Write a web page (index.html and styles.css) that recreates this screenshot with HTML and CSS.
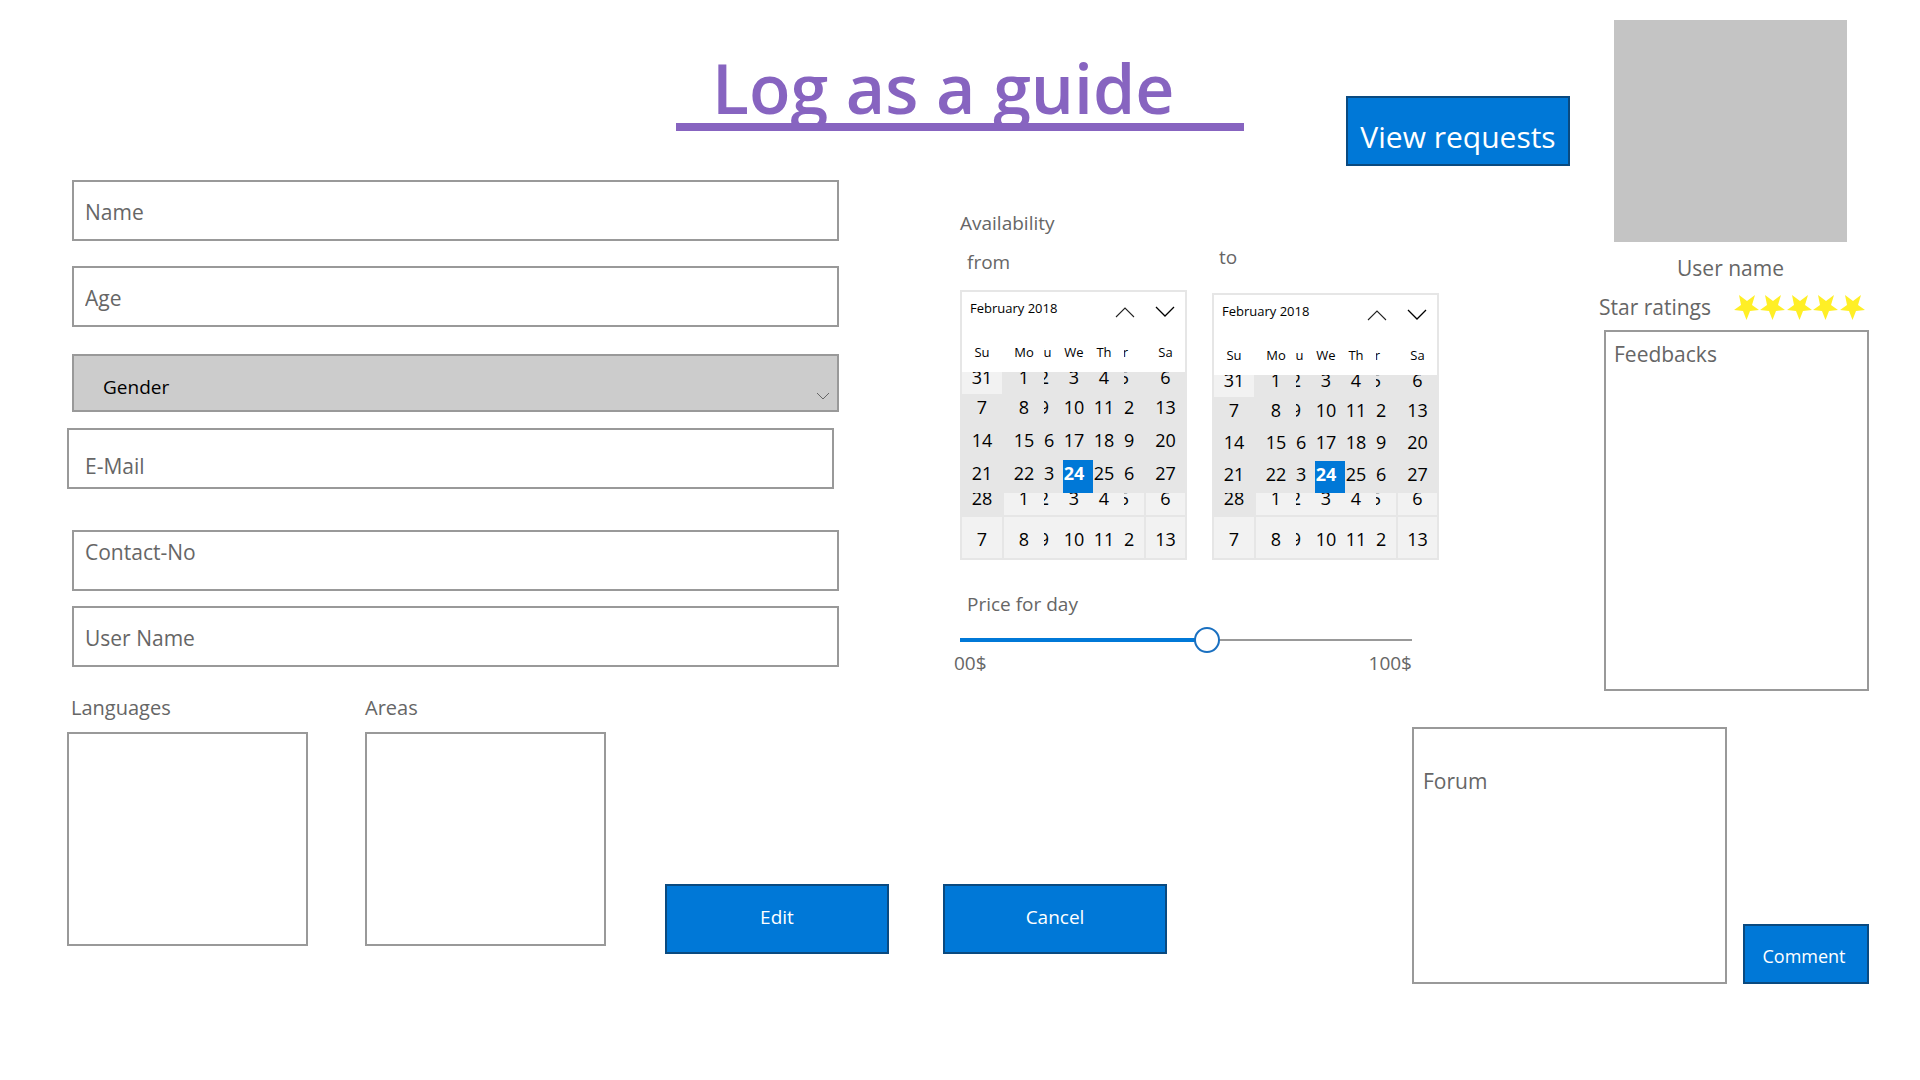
FILE: index.html
```html
<!DOCTYPE html>
<html lang="en">
<head>
<meta charset="utf-8">
<title>Log as a guide</title>
<link rel="stylesheet" href="styles.css">
</head>
<body>
<div class="page">
  <div class="top">
    <main class="main">
      <header class="header">
        <h1 class="title">Log as a guide</h1>
        <button class="btn btn-large" type="button">View requests</button>
      </header>
      <div class="columns">
        <form class="form">
          <input class="field" type="text" aria-label="Name" placeholder="Name">
          <input class="field field-age" type="text" aria-label="Age" placeholder="Age">
          <div class="select-wrap">
            <select class="select" aria-label="Gender"><option>Gender</option></select>
            <svg class="select-arrow" width="14" height="8" viewBox="0 0 14 8" aria-hidden="true"><path d="M1 1l6 6 6-6" fill="none" stroke="#666" stroke-width="1"/></svg>
          </div>
          <input class="field field-email" type="email" aria-label="E-Mail" placeholder="E-Mail">
          <input class="field field-contact" type="tel" aria-label="Contact-No" placeholder="Contact-No">
          <input class="field field-user" type="text" aria-label="User Name" placeholder="User Name">
        </form>
        <section class="availability">
          <h2 class="label">Availability</h2>
          <div class="calendars">
            <div class="calendar-col">
              <h3 class="label label-inset">from</h3>
              <div class="calendar">
                <div class="cal-head">
                  <span class="cal-month">February 2018</span>
                  <button class="cal-nav" type="button" aria-label="Previous month"><svg width="20" height="12" viewBox="0 0 20 12"><path d="M1 11l9-9 9 9" fill="none" stroke="#222" stroke-width="1.1"/></svg></button>
                  <button class="cal-nav" type="button" aria-label="Next month"><svg width="20" height="12" viewBox="0 0 20 12"><path d="M1 1l9 9 9-9" fill="none" stroke="#000" stroke-width="1.3"/></svg></button>
                </div>
                <table class="days">
                  <thead><tr><th class="su"><span>Su</span></th><th class="mo"><span>Mo</span></th><th class="cut tu"><span>Tu</span></th><th class="we"><span>We</span></th><th class="th"><span>Th</span></th><th class="cut fr"><span>Fr</span></th><th class="sa"><span>Sa</span></th></tr></thead>
                  <tbody>
                    <tr class="short"><td class="su out"><span>31</span></td><td><span>1</span></td><td class="cut"><span>2</span></td><td><span>3</span></td><td><span>4</span></td><td class="cut"><span>5</span></td><td class="sa"><span>6</span></td></tr>
                    <tr><td class="su"><span>7</span></td><td><span>8</span></td><td class="cut"><span>9</span></td><td><span>10</span></td><td><span>11</span></td><td class="cut"><span>12</span></td><td class="sa"><span>13</span></td></tr>
                    <tr><td class="su"><span>14</span></td><td><span>15</span></td><td class="cut"><span>16</span></td><td><span>17</span></td><td><span>18</span></td><td class="cut"><span>19</span></td><td class="sa"><span>20</span></td></tr>
                    <tr><td class="su"><span>21</span></td><td><span>22</span></td><td class="cut"><span>23</span></td><td class="today"><span>24</span></td><td><span>25</span></td><td class="cut"><span>26</span></td><td class="sa"><span>27</span></td></tr>
                    <tr class="short"><td class="su"><span>28</span></td><td class="out"><span>1</span></td><td class="cut out"><span>2</span></td><td class="out"><span>3</span></td><td class="out"><span>4</span></td><td class="cut out"><span>5</span></td><td class="sa out"><span>6</span></td></tr>
                    <tr class="tall"><td class="su out"><span>7</span></td><td class="out"><span>8</span></td><td class="cut out"><span>9</span></td><td class="out"><span>10</span></td><td class="out"><span>11</span></td><td class="cut out"><span>12</span></td><td class="sa out"><span>13</span></td></tr>
                  </tbody>
                </table>
              </div>
            </div>
            <div class="calendar-col calendar-col-to">
              <h3 class="label label-inset">to</h3>
              <div class="calendar">
                <div class="cal-head">
                  <span class="cal-month">February 2018</span>
                  <button class="cal-nav" type="button" aria-label="Previous month"><svg width="20" height="12" viewBox="0 0 20 12"><path d="M1 11l9-9 9 9" fill="none" stroke="#222" stroke-width="1.1"/></svg></button>
                  <button class="cal-nav" type="button" aria-label="Next month"><svg width="20" height="12" viewBox="0 0 20 12"><path d="M1 1l9 9 9-9" fill="none" stroke="#000" stroke-width="1.3"/></svg></button>
                </div>
                <table class="days">
                  <thead><tr><th class="su"><span>Su</span></th><th class="mo"><span>Mo</span></th><th class="cut tu"><span>Tu</span></th><th class="we"><span>We</span></th><th class="th"><span>Th</span></th><th class="cut fr"><span>Fr</span></th><th class="sa"><span>Sa</span></th></tr></thead>
                  <tbody>
                    <tr class="short"><td class="su out"><span>31</span></td><td><span>1</span></td><td class="cut"><span>2</span></td><td><span>3</span></td><td><span>4</span></td><td class="cut"><span>5</span></td><td class="sa"><span>6</span></td></tr>
                    <tr><td class="su"><span>7</span></td><td><span>8</span></td><td class="cut"><span>9</span></td><td><span>10</span></td><td><span>11</span></td><td class="cut"><span>12</span></td><td class="sa"><span>13</span></td></tr>
                    <tr><td class="su"><span>14</span></td><td><span>15</span></td><td class="cut"><span>16</span></td><td><span>17</span></td><td><span>18</span></td><td class="cut"><span>19</span></td><td class="sa"><span>20</span></td></tr>
                    <tr><td class="su"><span>21</span></td><td><span>22</span></td><td class="cut"><span>23</span></td><td class="today"><span>24</span></td><td><span>25</span></td><td class="cut"><span>26</span></td><td class="sa"><span>27</span></td></tr>
                    <tr class="short"><td class="su"><span>28</span></td><td class="out"><span>1</span></td><td class="cut out"><span>2</span></td><td class="out"><span>3</span></td><td class="out"><span>4</span></td><td class="cut out"><span>5</span></td><td class="sa out"><span>6</span></td></tr>
                    <tr class="tall"><td class="su out"><span>7</span></td><td class="out"><span>8</span></td><td class="cut out"><span>9</span></td><td class="out"><span>10</span></td><td class="out"><span>11</span></td><td class="cut out"><span>12</span></td><td class="sa out"><span>13</span></td></tr>
                  </tbody>
                </table>
              </div>
            </div>
          </div>
          <div class="price">
            <label class="label label-inset" for="price">Price for day</label>
            <input class="slider" id="price" type="range" min="0" max="100" value="55">
            <div class="scale"><span>00$</span><span>100$</span></div>
          </div>
        </section>
      </div>
    </main>
    <aside class="profile">
      <div class="photo"></div>
      <p class="user">User name</p>
      <div class="rating">
        <span>Star ratings</span>
        <svg width="131" height="25" viewBox="0 0 131 25" role="img" aria-label="5 stars">
          <defs><path id="star" d="M5 0l8 6 8-6-3 10 7 5-9 1-3.500 9-3.500-9-9-1 7-5z"/></defs>
          <g fill="#ffef26"><use href="#star"/><use href="#star" x="26"/><use href="#star" x="53"/><use href="#star" x="79"/><use href="#star" x="106"/></g>
        </svg>
      </div>
      <textarea class="box feedbacks" aria-label="Feedbacks" placeholder="Feedbacks"></textarea>
    </aside>
  </div>
  <div class="bottom">
    <div class="list languages">
      <label class="list-label" for="languages">Languages</label>
      <textarea class="box list-box" id="languages"></textarea>
    </div>
    <div class="list">
      <label class="list-label" for="areas">Areas</label>
      <textarea class="box list-box" id="areas"></textarea>
    </div>
    <div class="actions">
      <button class="btn" type="button">Edit</button>
      <button class="btn" type="button">Cancel</button>
    </div>
    <div class="forum">
      <textarea class="box forum-box" aria-label="Forum" placeholder="Forum"></textarea>
      <button class="btn btn-comment" type="button">Comment</button>
    </div>
  </div>
</div>
</body>
</html>
```
FILE: styles.css
```css
* {
  box-sizing: border-box;
}

body {
  margin: 0;
  background: #fff;
  color: #666;
  font-family: "Open Sans", "Noto Sans", sans-serif;
  font-size: 21px;
  line-height: 28px;
}

h1, h2, h3, p {
  margin: 0;
  font-weight: 400;
}

button, input, select, textarea {
  margin: 0;
  border-radius: 0;
  font: inherit;
}

.page {
  padding: 20px 51px 20px 67px;
}

.top {
  display: grid;
  grid-template-columns: minmax(0, 1fr) 265px;
  gap: 34px;
}

/* Header */
.header {
  display: flex;
  justify-content: flex-end;
  align-items: flex-end;
  gap: 102px;
  height: 146px;
}

.title {
  width: 568px;
  height: 84px;
  margin-bottom: 35px;
  padding-left: 36px;
  overflow: hidden;
  border-bottom: 8px solid #8764c0;
  color: #8764c0;
  font-size: 68px;
  font-weight: 600;
  line-height: 81px;
  white-space: nowrap;
}

.btn {
  width: 224px;
  height: 70px;
  padding: 0 0 4px;
  border: 2px solid #0a4a80;
  background: #0078d7;
  color: #fff;
  font-size: 19px;
}

.btn-large {
  padding: 12px 0 0;
  font-size: 30px;
  white-space: nowrap;
}

/* Form */
.columns {
  display: flex;
  gap: 121px;
  padding-right: 130px;
}

.form {
  display: flex;
  flex: 1;
  flex-direction: column;
  min-width: 0;
  padding: 14px 0 0 5px;
}

.field {
  width: 100%;
  height: 61px;
  padding: 2px 11px 0;
  border: 2px solid #999;
  background: #fff;
  color: #333;
}

::placeholder {
  color: #666;
  opacity: 1;
}

.field-age {
  margin: 25px 0 27px;
}

.select-wrap {
  position: relative;
  height: 58px;
}

.select {
  width: 100%;
  height: 100%;
  padding: 8px 29px 0;
  border: 2px solid #999;
  background: #ccc;
  color: #000;
  font-size: 19px;
  appearance: none;
}

.select-arrow {
  position: absolute;
  right: 9px;
  bottom: 12px;
}

.field-email {
  margin: 16px 0 41px -5px;
  padding: 15px 16px 0;
}

.field-contact {
  margin-bottom: 15px;
  padding: 0 11px 17px;
}

/* Availability */
.availability {
  width: 480px;
  padding-top: 43px;
}

.label {
  display: block;
  font-size: 19px;
  line-height: 28px;
}

.label-inset {
  padding-left: 7px;
}

.calendars {
  display: flex;
  align-items: flex-end;
  gap: 25px;
  padding-top: 6px;
}

.calendar {
  width: 227px;
  margin-top: 14px;
  border: 2px solid #e6e6e6;
}

.calendar-col-to .calendar {
  margin-top: 22px;
}

.cal-head {
  display: flex;
  gap: 20px;
  height: 48px;
  padding: 5px 10px 0 8px;
  color: #000;
  font-size: 13px;
  line-height: 22px;
}

.cal-month {
  flex: 1;
  white-space: nowrap;
}

.cal-nav {
  width: 20px;
  height: 30px;
  padding: 0;
  border: 0;
  background: none;
}

.cal-nav svg {
  display: block;
}

.days {
  width: 223px;
  border-spacing: 0;
  table-layout: fixed;
  background: #e6e6e6;
  color: #000;
  font-size: 18px;
}

.days th {
  padding: 0;
  background: #fff;
  font-size: 13px;
  font-weight: 400;
}

.days td {
  padding: 0;
}

.days span {
  display: block;
  height: 33px;
  overflow: hidden;
  line-height: 26px;
  text-align: center;
}

.days th span {
  height: 32px;
  line-height: 24px;
}

.days .su {
  width: 42px;
  border-right: 2px solid #e6e6e6;
}

.days .sa {
  width: 41px;
  border-left: 2px solid #e6e6e6;
}

.days th.su, .days th.sa {
  border-color: #fff;
}

.mo {
  width: 40px;
}

.tu {
  width: 19px;
}

.we {
  width: 30px;
}

.th {
  width: 31px;
}

.fr {
  width: 20px;
}

/* Narrow columns show only the right half of their text */
.days .cut {
  overflow: hidden;
}

.cut span {
  width: 24px;
  margin-left: -12px;
}

.days th.fr span {
  margin-left: -14px;
}

.days tr > :nth-child(4) span, .days tr > :nth-child(5) span {
  width: 22px;
}

.days .short span {
  height: 22px;
  line-height: 10px;
}

.days .tall td {
  border-top: 2px solid #e6e6e6;
}

.days .tall span {
  height: 41px;
  line-height: 44px;
}

.days .out {
  background: #f2f2f2;
}

.days .today {
  background: #0078d7;
  color: #fff;
  font-weight: 700;
}

.calendar-col-to tbody span {
  height: 32px;
}

/* Price */
.price {
  width: 452px;
  padding-top: 30px;
}

.slider {
  display: block;
  width: 100%;
  height: 26px;
  margin: 9px 0 0;
  appearance: none;
  background:
    linear-gradient(#0078d7, #0078d7) left center / 55% 4px no-repeat,
    linear-gradient(#999, #999) center / 100% 2px no-repeat;
}

.slider::-webkit-slider-thumb {
  width: 26px;
  height: 26px;
  border: 2px solid #1a70c0;
  border-radius: 50%;
  appearance: none;
  background: #fff;
}

.scale {
  display: flex;
  justify-content: space-between;
  margin-left: -6px;
  font-size: 19px;
  line-height: 20px;
}

/* Profile */
.profile {
  display: flex;
  flex-direction: column;
}

.photo {
  width: 233px;
  height: 222px;
  margin-left: 10px;
  background: #c4c4c4;
}

.user {
  width: 233px;
  margin: 12px 0 0 10px;
  text-align: center;
}

.rating {
  display: flex;
  justify-content: space-between;
  align-items: center;
  margin: 11px 4px 9px -5px;
}

.box {
  display: block;
  padding: 8px;
  border: 2px solid #999;
  background: #fff;
  color: #333;
  resize: none;
}

.feedbacks {
  width: 100%;
  height: 361px;
}

/* Bottom row */
.bottom {
  display: flex;
  align-items: flex-start;
  padding-top: 3px;
}

.list {
  width: 241px;
  margin-right: 59px;
}

.languages {
  margin-right: 57px;
}

.list-label {
  display: block;
  margin-bottom: 10px;
  font-size: 20px;
}

.languages .list-label {
  padding-left: 4px;
}

.list-box {
  width: 100%;
  height: 214px;
}

.actions {
  display: flex;
  gap: 54px;
  padding-top: 190px;
}

.forum {
  display: flex;
  align-items: flex-end;
  gap: 16px;
  margin-left: auto;
  padding-top: 33px;
}

.forum-box {
  width: 315px;
  height: 257px;
  padding: 38px 9px 8px;
}

.btn-comment {
  width: 126px;
  height: 60px;
  padding: 4px 4px 0 0;
  font-size: 18px;
}
```
